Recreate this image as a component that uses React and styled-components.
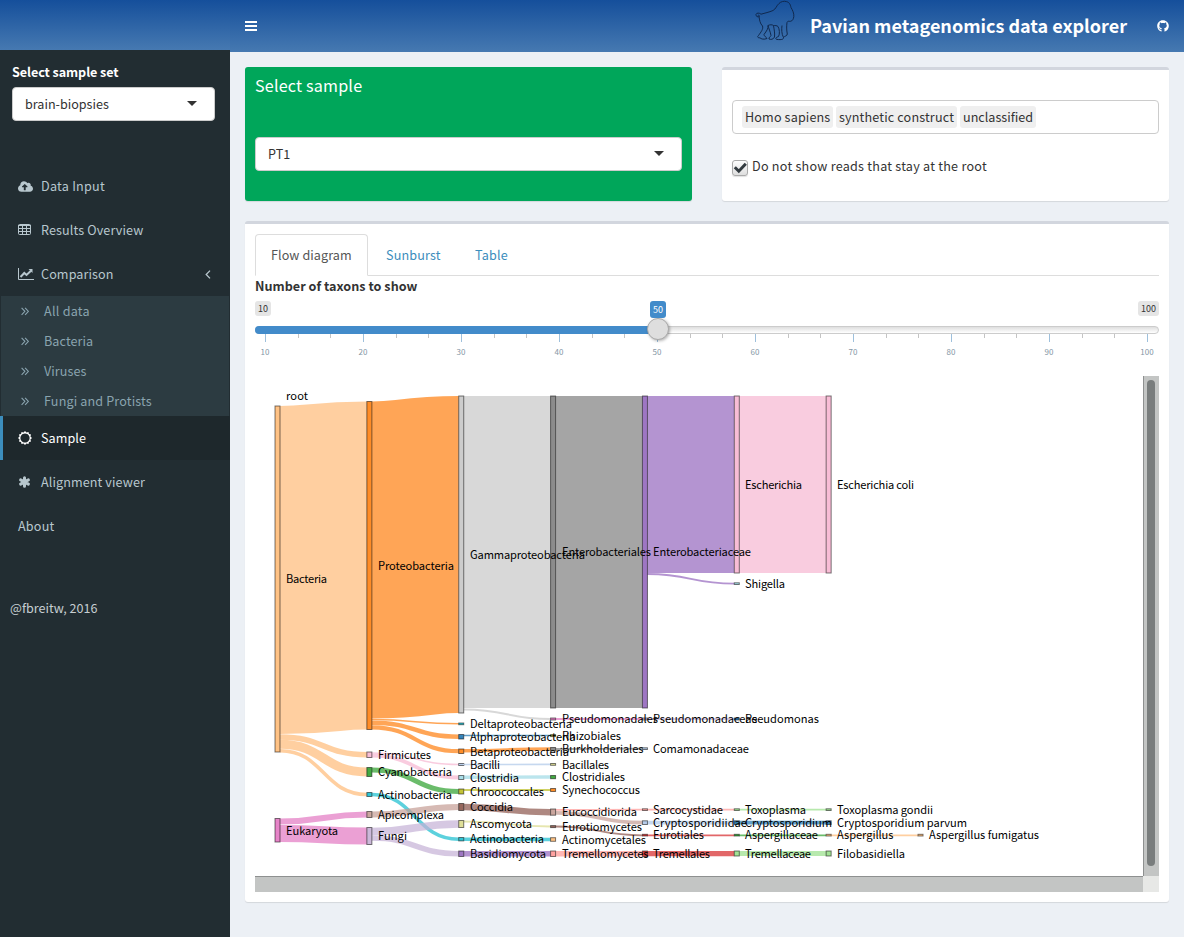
import React from "react";
import styled, { createGlobalStyle } from "styled-components";
import { FaCloudUploadAlt, FaGithub } from "react-icons/fa";

const Global = createGlobalStyle`
  * { box-sizing: border-box; }
  body {
    margin: 0;
    background: #ecf0f5;
    color: #333;
    font-family: "Noto Sans CJK SC", "Open Sans", sans-serif;
    font-size: 12.6px;
    line-height: 20px;
  }
  ul { margin: 0; padding: 0; list-style: none; }
`;

const Page = styled.div`
  display: flex;
  width: 1184px;
  height: 937px;
  overflow: hidden;
`;

const Sidebar = styled.aside`
  display: flex;
  flex-direction: column;
  width: 230px;
  flex: none;
  background: #222d32;
`;
const LogoBar = styled.div`
  height: 50px;
  flex: none;
  background: linear-gradient(#154f9b, #4679b1);
`;
const SampleSet = styled.div`
  display: flex;
  flex-direction: column;
  gap: 5px;
  padding: 12px 15px 0 12px;
  height: 114px;
  flex: none;
`;
const FieldLabel = styled.div`
  font-weight: 700;
  line-height: 20px;
  letter-spacing: ${(p) => p.$ls || 0}px;
  color: ${(p) => p.$color || "#333"};
`;
const Select = styled.div`
  display: flex;
  align-items: center;
  justify-content: space-between;
  height: 34px;
  padding: 0 17px 0 12px;
  background: #fff;
  border: 1px solid #ccc;
  border-radius: 4px;
  color: #333;
`;
const Caret = styled.span`
  border: 5px solid transparent;
  border-top-color: #333;
  border-bottom: 0;
  margin-top: -2px;
`;
const MenuItem = styled.li`
  display: flex;
  align-items: center;
  height: 44px;
  padding: 0 19px 0 15px;
  border-left: 3px solid ${(p) => (p.$active ? "#3c8dbc" : "transparent")};
  background: ${(p) => (p.$active ? "#1e282c" : "transparent")};
  color: ${(p) => (p.$active ? "#fff" : "#b8c7ce")};
`;
const IconSlot = styled.span`
  display: flex;
  align-items: center;
  width: 23px;
`;
const ItemText = styled.span`
  flex: 1;
  letter-spacing: ${(p) => p.$ls || 0}px;
`;
const SubMenu = styled.ul`
  margin: 0 1px;
  background: #2c3b41;
`;
const SubItem = styled.li`
  display: flex;
  align-items: center;
  height: 30px;
  padding-left: 20px;
  color: #8aa4af;
`;
const Credit = styled.div`
  padding: 50px 10px;
  color: #c6ced1;
`;

const Main = styled.main`
  flex: 1;
  display: flex;
  flex-direction: column;
`;
const Navbar = styled.header`
  display: flex;
  align-items: center;
  height: 52px;
  padding: 0 15px;
  color: #fff;
  background: linear-gradient(#154f9b, #4679b1);
`;
const Brand = styled.div`
  display: flex;
  align-items: center;
  margin-left: auto;
  height: 52px;
`;
const BrandTitle = styled.h1`
  margin: 0 30px 0 15px;
  height: 52px;
  font-size: 18px;
  line-height: 50px;
  font-weight: 700;
  white-space: nowrap;
`;
const Content = styled.div`
  display: grid;
  grid-template-columns: 447px 447px;
  column-gap: 30px;
  row-gap: 20px;
  padding: 15px;
`;
const Box = styled.section`
  background: #fff;
  border-top: 3px solid #d2d6de;
  border-radius: 3px;
  box-shadow: 0 1px 1px rgba(0, 0, 0, 0.1);
  padding: 10px;
  ${(p) => p.$wide && "grid-column: 1 / -1; height: 681px;"}
`;
const GreenBox = styled(Box)`
  height: 134px;
  border-top: 0;
  background: #00a65a;
`;
const BoxTitle = styled.h3`
  margin: 0 0 44px;
  height: 16px;
  line-height: 16px;
  font-size: 16.1px;
  font-weight: 400;
  color: #fff;
  letter-spacing: 0.2px;
`;
const TagInput = styled.div`
  display: flex;
  align-items: center;
  gap: 3px;
  height: 34px;
  margin-top: 20px;
  padding: 0 9px;
  border: 1px solid #ccc;
  border-radius: 4px;
`;
const Tag = styled.span`
  width: ${(p) => p.$w}px;
  height: 22px;
  line-height: 22px;
  padding-left: 3px;
  white-space: nowrap;
  background: #efefef;
  border-radius: 3px;
  letter-spacing: ${(p) => p.$ls || 0}px;
`;
const CheckRow = styled.label`
  display: flex;
  align-items: flex-start;
  gap: 4px;
  margin-top: 22px;
  letter-spacing: 0.24px;
`;
const CheckBox = styled.span`
  display: flex;
  width: 16px;
  height: 16px;
  margin-top: 4px;
  border: 1px solid #aaa;
  border-radius: 3px;
  background: linear-gradient(#fdfdfd, #dedede);
  box-shadow: 0 1px 1px rgba(0, 0, 0, 0.12);
`;
const Tabs = styled.div`
  display: flex;
  gap: 2px;
  height: 42px;
  border-bottom: 1px solid #ddd;
`;
const Tab = styled.div`
  height: 42px;
  width: ${(p) => p.$w}px;
  line-height: 20px;
  padding: 10px 0 0 15px;
  white-space: nowrap;
  border: 1px solid ${(p) => (p.$active ? "#ddd" : "transparent")};
  border-bottom-color: ${(p) => (p.$active ? "#fff" : "transparent")};
  border-radius: 4px 4px 0 0;
  color: ${(p) => (p.$active ? "#555" : "#3c8dbc")};
  letter-spacing: ${(p) => p.$ls || 0}px;
`;
const Slider = styled.div`
  position: relative;
  height: 80px;
  padding-top: 5px;
`;
const Bounds = styled.div`
  display: flex;
  justify-content: space-between;
`;
const Badge = styled.span`
  height: ${(p) => (p.$value ? 17 : 15)}px;
  padding: 0 3px;
  line-height: ${(p) => (p.$value ? 17 : 15)}px;
  font-size: 9px;
  color: ${(p) => (p.$value ? "#fff" : "#333")};
  background: ${(p) => (p.$value ? "#428bca" : "#e5e5e5")};
  border-radius: 3px;
`;
const Track = styled.div`
  height: 8px;
  margin-top: 10px;
  border: 1px solid #ccc;
  border-radius: 8px;
  background: linear-gradient(#dedede, #fff);
`;
const Filled = styled.div`
  width: 404px;
  height: 8px;
  margin: -1px 0 0 -1px;
  border-radius: 8px 0 0 8px;
  background: #428bca;
`;
const Knob = styled.div`
  position: absolute;
  left: 392px;
  top: 22px;
  width: 22px;
  height: 22px;
  border: 1px solid #aaa;
  border-radius: 50%;
  background: #dedede;
  box-shadow: 1px 1px 3px rgba(0, 0, 0, 0.3);
`;
const ValueBadge = styled(Badge)`
  position: absolute;
  left: 395px;
  top: 5px;
`;
const Scale = styled.div`
  display: flex;
  padding-left: 10px;
`;
const Decade = styled.div`
  display: grid;
  flex: none;
  grid-template-columns: 33px 32px 33px;
  width: ${(p) => (p.$last ? 12 : 98)}px;
`;
const Tick = styled.i`
  height: ${(p) => (p.$major ? 8 : 4)}px;
  border-left: 1px solid ${(p) => (p.$major ? "#9ec0dc" : "#c4c4c4")};
`;
const TickLabel = styled.span`
  grid-row: 2;
  width: 40px;
  margin-left: -20px;
  margin-top: 3px;
  line-height: 14px;
  font-size: 8px;
  text-align: center;
  color: #8496a5;
`;
const FlowPane = styled.div`
  display: grid;
  grid-template-columns: 888px 16px;
  grid-template-rows: 500px 16px;
`;
const VBar = styled.div`
  padding: 4px 4px 10px 3px;
  border-left: 1px solid #8e9090;
  background: #c3c5c4;
`;
const Thumb = styled.div`
  height: 100%;
  border-radius: 4px;
  background: #797d7d;
`;
const HBar = styled.div`
  border-top: 1px solid #8e9090;
  background: #c3c5c4;
`;
const Corner = styled.div`
  background: #e7e8e6;
`;
const FlowSvg = styled.svg`
  display: block;
  overflow: hidden;
`;
const NodeLabel = styled.text`
  font-size: 11.1px;
  fill: #000;
`;

/* column, top, bottom, colour, label, right end of label */
const nodes = [
  [0, 406, 752, "#ffbb78", "Bacteria", 327],
  [0, 818.5, 842, "#e377c2", "Eukaryota", 338],
  [1, 401.5, 729.5, "#ff7f0e", "Proteobacteria", 454],
  [1, 752, 757.5, "#f7b6d2", "Firmicutes", 431],
  [1, 767.5, 776.5, "#2ca02c", "Cyanobacteria", 452],
  [1, 792.5, 796.5, "#17becf", "Actinobacteria", 452],
  [1, 811.5, 817.5, "#c49c94", "Apicomplexa", 444],
  [1, 827.5, 844.5, "#c5b0d5", "Fungi", 407],
  [2, 396, 713, "#c7c7c7", "Gammaproteobacteria", 585],
  [2, 723, 724.7, "#17becf", "Deltaproteobacteria", 572],
  [2, 734.5, 739, "#1f77b4", "Alphaproteobacteria", 575.5],
  [2, 749, 753.5, "#ff7f0e", "Betaproteobacteria", 569],
  [2, 763.5, 765.5, "#aec7e8", "Bacilli", 500],
  [2, 775.5, 779.5, "#9edae5", "Clostridia", 519],
  [2, 789, 794, "#bcbd22", "Chroococcales", 544],
  [2, 803.5, 810.5, "#8c564b", "Coccidia", 513],
  [2, 820.5, 827.5, "#dbdb8d", "Ascomycota", 532],
  [2, 837.5, 840.9, "#17becf", "Actinobacteria", 544],
  [2, 851, 856.5, "#9467bd", "Basidiomycota", 546],
  [3, 396, 708, "#7f7f7f", "Enterobacteriales", 651],
  [3, 718, 720, "#e377c2", "Pseudomonadales", 658],
  [3, 734.6, 736.6, "#bcbd22", "Rhizobiales", 621],
  [3, 747.5, 750.9, "#7f7f7f", "Burkholderiales", 643.5],
  [3, 763.5, 765.3, "#dbdb8d", "Bacillales", 609],
  [3, 775.5, 778.7, "#2ca02c", "Clostridiales", 625],
  [3, 788.5, 791.5, "#ff7f0e", "Synechococcus", 640],
  [3, 809, 815.2, "#c49c94", "Eucoccidiorida", 637],
  [3, 825.6, 827.6, "#8c564b", "Eurotiomycetes", 642],
  [3, 837.7, 841.3, "#ffbb78", "Actinomycetales", 646],
  [3, 851, 856.5, "#ff9896", "Tremellomycetes", 648.5],
  [4, 396, 708, "#9467bd", "Enterobacteriaceae", 751],
  [4, 718, 720, "#c5b0d5", "Pseudomonadaceae", 757.5],
  [4, 747.8, 749.5, "#aec7e8", "Comamonadaceae", 749],
  [4, 808.8, 810.5, "#ff9896", "Sarcocystidae", 723],
  [4, 820.8, 824.5, "#aec7e8", "Cryptosporidiidae", 747],
  [4, 834.3, 836, "#d62728", "Eurotiales", 704],
  [4, 851, 856.5, "#d62728", "Tremellales", 710],
  [5, 396, 573, "#f7b6d2", "Escherichia", 802],
  [5, 582.8, 584.5, "#9edae5", "Shigella", 785],
  [5, 718, 720, "#1f77b4", "Pseudomonas", 819],
  [5, 808.8, 810.5, "#98df8a", "Toxoplasma", 806],
  [5, 820.8, 824.5, "#1f77b4", "Cryptosporidium", 832],
  [5, 834.3, 836, "#2ca02c", "Aspergillaceae", 818],
  [5, 851, 856, "#98df8a", "Tremellaceae", 811],
  [6, 396, 573, "#f7b6d2", "Escherichia coli", 914],
  [6, 808.8, 810.5, "#98df8a", "Toxoplasma gondii", 933],
  [6, 820.8, 824.5, "#1f77b4", "Cryptosporidium parvum", 967],
  [6, 834.3, 836, "#ffbb78", "Aspergillus", 893.5],
  [6, 851, 856, "#98df8a", "Filobasidiella", 905],
  [7, 834.3, 836, "#ffbb78", "Aspergillus fumigatus", 1039],
];

/* source column, source centre, target centre, thickness, colour */
const links = [
  [0, 570, 565.5, 328, "#ffbb78"],
  [0, 737, 754.7, 5.5, "#ffbb78"],
  [0, 744.3, 772, 9, "#ffbb78"],
  [0, 750.7, 794.5, 3.6, "#ffbb78"],
  [0, 821.5, 814.5, 6, "#e377c2"],
  [0, 833.5, 836, 17, "#e377c2"],
  [1, 560, 554.5, 317, "#ff7f0e"],
  [1, 719.6, 723.8, 1.5, "#ff7f0e"],
  [1, 722.7, 736.7, 4.4, "#ff7f0e"],
  [1, 727.3, 751.2, 4.2, "#ff7f0e"],
  [1, 753, 764.5, 1.6, "#f7b6d2"],
  [1, 755.7, 777.5, 3.8, "#f7b6d2"],
  [1, 770, 791.5, 5, "#2ca02c"],
  [1, 794.5, 839.3, 3.6, "#17becf"],
  [1, 814.5, 807, 6, "#c49c94"],
  [1, 831.5, 824, 7.5, "#c5b0d5"],
  [1, 838, 853.7, 5.6, "#c5b0d5"],
  [2, 552, 552, 312, "#c7c7c7"],
  [2, 709.5, 719, 2, "#c7c7c7"],
  [2, 735.5, 735.5, 1.6, "#1f77b4"],
  [2, 750.7, 749, 3.4, "#ff7f0e"],
  [2, 764.5, 764.4, 1.6, "#aec7e8"],
  [2, 777.3, 777, 3.4, "#9edae5"],
  [2, 790, 790, 2, "#bcbd22"],
  [2, 807, 812.2, 6.6, "#8c564b"],
  [2, 821.5, 826.5, 1.8, "#dbdb8d"],
  [2, 839.3, 839.5, 3.6, "#17becf"],
  [2, 853.7, 853.7, 5.5, "#9467bd"],
  [3, 552, 552, 312, "#7f7f7f"],
  [3, 719, 719, 1.8, "#e377c2"],
  [3, 749, 748.7, 1.8, "#7f7f7f"],
  [3, 809.8, 809.7, 1.7, "#ff9896"],
  [3, 812.8, 822.7, 3.8, "#c49c94"],
  [3, 826.5, 835.3, 1.8, "#8c564b"],
  [3, 853.7, 853.7, 5.5, "#ff9896"],
  [4, 484.5, 484.5, 177, "#9467bd"],
  [4, 574, 583.6, 1.8, "#9467bd"],
  [4, 719, 719, 1.8, "#c5b0d5"],
  [4, 809.7, 809.7, 1.7, "#ff9896"],
  [4, 822.7, 822.7, 3.8, "#aec7e8"],
  [4, 835.3, 835.3, 1.8, "#d62728"],
  [4, 853.7, 853.7, 5.2, "#d62728"],
  [5, 484.5, 484.5, 177, "#f7b6d2"],
  [5, 809.7, 809.7, 1.7, "#98df8a"],
  [5, 822.7, 822.7, 3.8, "#1f77b4"],
  [5, 835.3, 835.3, 1.8, "#2ca02c"],
  [5, 853.5, 853.5, 5, "#98df8a"],
  [6, 835.3, 835.3, 1.8, "#ffbb78"],
];

const OX = 255;
const OY = 376;
const colX = (c) => 275 - OX + c * 91.86;

function Flow() {
  return (
    <FlowSvg width="888" height="500">
      {links.map(([c, a, b, w, color], i) => {
        const x0 = colX(c) + 5;
        const x1 = colX(c + 1);
        const m = (x0 + x1) / 2;
        return (
          <path
            key={i}
            d={`M${x0},${a - OY}C${m},${a - OY} ${m},${b - OY} ${x1},${b - OY}`}
            fill="none"
            stroke={color}
            strokeWidth={w}
            strokeOpacity="0.7"
          />
        );
      })}
      {nodes.map(([c, a, b, color], i) => (
        <rect
          key={i}
          x={colX(c)}
          y={a - OY}
          width="5"
          height={b - a}
          fill={color}
          fillOpacity="0.9"
          stroke="#000"
          strokeOpacity="0.52"
        />
      ))}
      <NodeLabel x={31} y={24} textLength={22}>root</NodeLabel>
      {nodes.map(([c, a, b, , label, end], i) => {
        const x = Math.round(colX(c) + 11);
        return (
          <NodeLabel key={i} x={x} y={Math.round((a + b) / 2 - OY + 4.28)} textLength={end - OX - x}>
            {label}
          </NodeLabel>
        );
      })}
    </FlowSvg>
  );
}

const Bars = () => (
  <svg width="12" height="10" fill="#fff">
    <rect width="12" height="2" />
    <rect y="4" width="12" height="2" />
    <rect y="8" width="12" height="2" />
  </svg>
);
const BaboonSvg = styled.svg`
  align-self: flex-start;
`;
const Baboon = () => (
  <BaboonSvg width="40" height="42" viewBox="0 0 40 42" fill="none" stroke="#10294f" strokeWidth="1" strokeLinejoin="round">
    <path d="M6 14.2C4.500 12.800 1.500 12.600 1 14.400C.600 16.500 3 17.500 4.400 16.400C4.600 15.200 3.500 15 2.800 15.500M6 14.200C10 13 14 12.300 18 10.500C21 9 21.500 5.500 24 3.500C26 1.500 29 .8 31.500 1.600C35 2.500 35.500 5.500 36 7.500C37.500 10 39.200 13.500 38.800 16.500C38.500 19 37.500 21 35.500 21.300C33.500 21.600 33 20.500 32 22.500C31.500 26 31.500 30 32.300 34C32.300 36 29.500 36 28.500 37.500C28.500 39.500 27 39.800 22 39.500C20 39 20.500 37.500 23.500 36.500C25 34 24.500 29 23 26.500C22 25.500 20 25.500 18.500 25.500C19 29 20 33 19.500 37M13 25.500C13.500 28.500 11.500 31 9 34.500C9 36.500 11.500 37 12 38.500C9 39.800 6 39 5 37.800C2.500 38 2 36.500 3.500 35.500C6 32 8.500 29 7.500 26C5 23.500 4.500 20 4 16.500M13 25.500C15 24.500 17 24.500 18.500 25.500M19.500 37C18.500 39.500 15.500 39.800 14 39C13.500 37.500 15.500 36.800 16 35.500C15.500 32 13.500 28 13 25.500M28.500 37.500C26.500 34 26.500 29 27 25.500" />
  </BaboonSvg>
);
const TableIcon = () => (
  <svg width="13" height="12" fill="none" stroke="currentColor">
    <rect x=".5" y=".5" width="12" height="10" rx="1" />
    <path d="M0 1.500H13M0 4.500H13M0 7.500H13M4.500 1V11M8.500 1V11" />
  </svg>
);
const LineChart = () => (
  <svg width="16" height="12" fill="none" stroke="currentColor">
    <path d="M.5 0V11.500H16" />
    <path d="M2.500 9L6.300 5L8.500 7L13 2.700" strokeWidth="2" />
    <path d="M10.500 1H14.500V5Z" fill="currentColor" stroke="none" />
  </svg>
);
const AngleLeft = () => (
  <svg width="6" height="9" fill="none" stroke="currentColor" strokeWidth="1.300">
    <path d="M5 .6L1.200 4.500L5 8.400" />
  </svg>
);
const AngleDouble = () => (
  <svg width="8" height="9" fill="none" stroke="currentColor" strokeWidth="1.100">
    <path d="M.6 .8L3.900 4.300L.6 7.800M4.100 .8L7.400 4.300L4.100 7.800" />
  </svg>
);
const Asterisk = () => (
  <svg width="13" height="12" fill="none" stroke="currentColor" strokeWidth="3" strokeLinecap="round">
    <path d="M6.500 1.700V10.300M2.600 3.900L10.400 8.100M10.400 3.900L2.600 8.100" />
  </svg>
);
const Sun = () => {
  const pts = Array.from({ length: 24 }, (_, i) => {
    const r = i % 2 ? 5.6 : 7;
    const t = (i * Math.PI) / 12;
    return `${7 + r * Math.sin(t)},${7 - r * Math.cos(t)}`;
  }).join("L");
  return (
    <svg width="14" height="14" fill="currentColor">
      <path fillRule="evenodd" d={`M${pts}ZM7 2.400a4.600 4.600 0 1 0 .01 0Z`} />
    </svg>
  );
};
const CheckMark = () => (
  <svg width="14" height="14" fill="none" stroke="#333b40" strokeWidth="3">
    <path d="M1.800 6.200L5.800 10.200L12.800 2.800" />
  </svg>
);

const topItems = [
  ["Data Input", <FaCloudUploadAlt size={15} />, 0.25],
  ["Results Overview", <TableIcon />, 0.12],
  ["Comparison", <LineChart />, 0.1],
];
const subItems = [
  ["All data", 0.25],
  ["Bacteria", 0.08],
  ["Viruses", 0.08],
  ["Fungi and Protists", 0.14],
];

export default function App() {
  return (
    <Page>
      <Global />
      <Sidebar>
        <LogoBar />
        <SampleSet>
          <FieldLabel $color="#fff" $ls={-0.08}>Select sample set</FieldLabel>
          <Select>brain-biopsies<Caret /></Select>
        </SampleSet>
        <ul>
          {topItems.map(([label, icon, ls]) => (
            <MenuItem key={label}>
              <IconSlot>{icon}</IconSlot>
              <ItemText $ls={ls}>{label}</ItemText>
              {label === "Comparison" && <AngleLeft />}
            </MenuItem>
          ))}
        </ul>
        <SubMenu>
          {subItems.map(([label, ls]) => (
            <SubItem key={label}>
              <IconSlot><AngleDouble /></IconSlot>
              <ItemText $ls={ls}>{label}</ItemText>
            </SubItem>
          ))}
        </SubMenu>
        <ul>
          <MenuItem $active>
            <IconSlot><Sun /></IconSlot>
            <ItemText $ls={0.05}>Sample</ItemText>
          </MenuItem>
          <MenuItem>
            <IconSlot><Asterisk /></IconSlot>
            <ItemText $ls={0.1}>Alignment viewer</ItemText>
          </MenuItem>
          <MenuItem><ItemText $ls={0.2}>About</ItemText></MenuItem>
        </ul>
        <Credit>@fbreitw, 2016</Credit>
      </Sidebar>
      <Main>
        <Navbar>
          <Bars />
          <Brand>
            <Baboon />
            <BrandTitle>Pavian metagenomics data explorer</BrandTitle>
            <FaGithub size={12} />
          </Brand>
        </Navbar>
        <Content>
          <GreenBox>
            <BoxTitle>Select sample</BoxTitle>
            <Select>PT1<Caret /></Select>
          </GreenBox>
          <Box>
            <TagInput>
              <Tag $w={91} $ls={0.14}>Homo sapiens</Tag>
              <Tag $w={121} $ls={0.15}>synthetic construct</Tag>
              <Tag $w={76}>unclassified</Tag>
            </TagInput>
            <CheckRow>
              <CheckBox><CheckMark /></CheckBox>
              Do not show reads that stay at the root
            </CheckRow>
          </Box>
          <Box $wide>
            <Tabs>
              <Tab $active $w={113} $ls={0.08}>Flow diagram</Tab>
              <Tab $w={87} $ls={0.14}>Sunburst</Tab>
              <Tab $w={65} $ls={0.2}>Table</Tab>
            </Tabs>
            <FieldLabel $ls={0.03}>Number of taxons to show</FieldLabel>
            <Slider>
              <Bounds><Badge>10</Badge><Badge>100</Badge></Bounds>
              <Track><Filled /></Track>
              <Scale>
                {[10, 20, 30, 40, 50, 60, 70, 80, 90, 100].map((n) => (
                  <Decade key={n} $last={n === 100}>
                    <Tick $major />
                    {n < 100 && <><Tick /><Tick /></>}
                    <TickLabel>{n}</TickLabel>
                  </Decade>
                ))}
              </Scale>
              <Knob />
              <ValueBadge $value>50</ValueBadge>
            </Slider>
            <FlowPane>
              <Flow />
              <VBar><Thumb /></VBar>
              <HBar />
              <Corner />
            </FlowPane>
          </Box>
        </Content>
      </Main>
    </Page>
  );
}
